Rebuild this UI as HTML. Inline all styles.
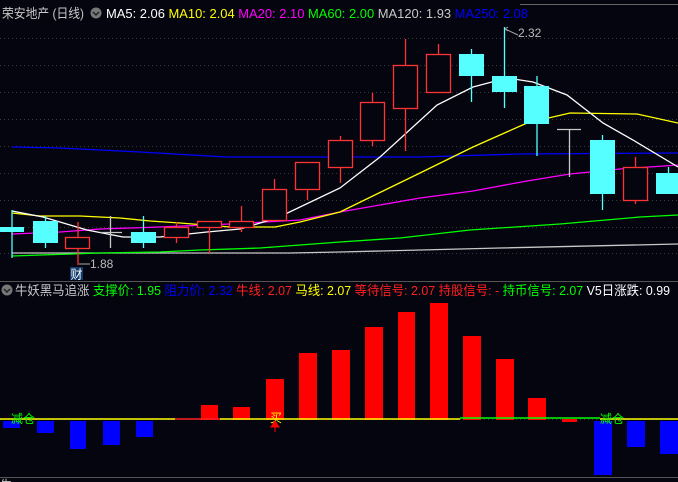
<!DOCTYPE html>
<html><head><meta charset="utf-8"><style>
html,body{margin:0;padding:0;background:#05050f;width:678px;height:482px;overflow:hidden}
svg{display:block}
text{font-family:"Liberation Sans","Noto Sans CJK SC",sans-serif}
</style></head><body>
<svg width="678" height="482" viewBox="0 0 678 482" xmlns="http://www.w3.org/2000/svg">
<rect width="678" height="482" fill="#05050f"/>
<line x1="520" y1="4.5" x2="678" y2="4.5" stroke="#666" stroke-width="1"/>
<g stroke="#3a3a3a" stroke-dasharray="1,3" stroke-width="1">
<line x1="0" y1="38.5" x2="678" y2="38.5"/><line x1="0" y1="65.5" x2="678" y2="65.5"/>
<line x1="0" y1="92.5" x2="678" y2="92.5"/><line x1="0" y1="119.5" x2="678" y2="119.5"/>
<line x1="0" y1="146.5" x2="678" y2="146.5"/><line x1="0" y1="173.5" x2="678" y2="173.5"/>
<line x1="0" y1="200.5" x2="678" y2="200.5"/><line x1="0" y1="227.5" x2="678" y2="227.5"/>
<line x1="0" y1="253.5" x2="678" y2="253.5"/>
<line x1="0" y1="419.5" x2="678" y2="419.5"/>
</g>
<line x1="0" y1="281.5" x2="678" y2="281.5" stroke="#555"/>
<line x1="0" y1="477.5" x2="678" y2="477.5" stroke="#555"/>
<g fill="none" stroke-width="1.3">
<polyline stroke="#0000ff" points="12,147 60,148 100,150 140,152 226,157 420,157 520,154 678,153"/>
<polyline stroke="#c8c8c8" points="12,253 290,253 340,252 500,248 678,244"/>
<polyline stroke="#00ff00" points="12,256 100,253 160,252 200,250 260,248 300,245 340,242 400,238 470,230 560,224 640,217 678,215"/>
<polyline stroke="#ff00ff" points="12,234 60,232 100,229 160,227 230,224 300,220 340,212 420,198 473,191 527,181 570,174 620,169 678,165"/>
<polyline stroke="#ffff00" points="12,213 40,216 80,216 120,218 150,221 180,223 230,227 275,227 300,222 340,212 420,173 473,147 527,123 570,113 637,114 678,123"/>
<polyline stroke="#ffffff" points="12,211 43,217 87,230 123,237 160,237 207,232 240,229 277,218 340,188 380,157 437,105 473,87 507,78 533,82 567,95 603,123 633,140 678,167"/>
<line x1="12" y1="210" x2="12" y2="258" stroke="#55ffff"/>
</g>
<g stroke-width="1.3">
<rect x="0" y="227" width="24" height="5" fill="#55ffff"/>
<line x1="45.5" y1="216" x2="45.5" y2="248" stroke="#55ffff"/><rect x="33" y="221" width="25" height="22" fill="#55ffff"/>
<line x1="78" y1="222" x2="78" y2="265" stroke="#ff3333"/><rect x="65.5" y="237.5" width="24" height="11" fill="#05050f" stroke="#ff3333"/>
<line x1="110.5" y1="216" x2="110.5" y2="248" stroke="#c8c8c8"/><line x1="100" y1="232.5" x2="122" y2="232.5" stroke="#c8c8c8"/>
<line x1="143.5" y1="216" x2="143.5" y2="248" stroke="#55ffff"/><rect x="131" y="232" width="25" height="11" fill="#55ffff"/>
<line x1="176.5" y1="222" x2="176.5" y2="243" stroke="#ff3333"/><rect x="164.5" y="227.5" width="24" height="10" fill="#05050f" stroke="#ff3333"/>
<line x1="209.5" y1="221" x2="209.5" y2="253" stroke="#ff3333"/><rect x="197.5" y="221.5" width="24" height="6" fill="#05050f" stroke="#ff3333"/>
<line x1="241.5" y1="206" x2="241.5" y2="232" stroke="#ff3333"/><rect x="229.5" y="221.5" width="24" height="6" fill="#05050f" stroke="#ff3333"/>
<line x1="274.5" y1="179" x2="274.5" y2="221" stroke="#ff3333"/><rect x="262.5" y="189.5" width="24" height="31" fill="#05050f" stroke="#ff3333"/>
<line x1="307.5" y1="162" x2="307.5" y2="200" stroke="#ff3333"/><rect x="295.5" y="162.5" width="24" height="27" fill="#05050f" stroke="#ff3333"/>
<line x1="340.5" y1="136" x2="340.5" y2="183" stroke="#ff3333"/><rect x="328.5" y="140.5" width="24" height="27" fill="#05050f" stroke="#ff3333"/>
<line x1="372.5" y1="93" x2="372.5" y2="146" stroke="#ff3333"/><rect x="360.5" y="102.5" width="24" height="38" fill="#05050f" stroke="#ff3333"/>
<line x1="405.5" y1="39" x2="405.5" y2="151" stroke="#ff3333"/><rect x="393.5" y="65.5" width="24" height="43" fill="#05050f" stroke="#ff3333"/>
<line x1="438.5" y1="44" x2="438.5" y2="54" stroke="#ff3333"/><rect x="426.5" y="54.5" width="24" height="38" fill="#05050f" stroke="#ff3333"/>
<line x1="471.5" y1="49" x2="471.5" y2="102" stroke="#55ffff"/><rect x="459" y="54" width="25" height="22" fill="#55ffff"/>
<line x1="504.5" y1="27" x2="504.5" y2="108" stroke="#55ffff"/><rect x="492" y="76" width="25" height="16" fill="#55ffff"/>
<line x1="537" y1="76" x2="537" y2="156" stroke="#55ffff"/><rect x="524" y="86" width="25" height="38" fill="#55ffff"/>
<line x1="569.5" y1="129" x2="569.5" y2="177" stroke="#c8c8c8"/><line x1="557" y1="129.5" x2="581" y2="129.5" stroke="#c8c8c8"/>
<line x1="602.5" y1="135" x2="602.5" y2="210" stroke="#55ffff"/><rect x="590" y="140" width="25" height="54" fill="#55ffff"/>
<line x1="635.5" y1="157" x2="635.5" y2="204" stroke="#ff3333"/><rect x="623.5" y="167.5" width="24" height="33" fill="#05050f" stroke="#ff3333"/>
<line x1="668.5" y1="167" x2="668.5" y2="173" stroke="#55ffff"/><rect x="656" y="173" width="22" height="21" fill="#55ffff"/>
</g>
<path d="M505 29 L508 27 M505 29 L508 31 M505 29 L518 35" stroke="#aaa" fill="none"/>
<text x="518" y="37" fill="#bbbbbb" font-size="12">2.32</text>
<path d="M79 264 L90 264" stroke="#aaa"/>
<text x="90" y="268" fill="#bbbbbb" font-size="12">1.88</text>
<rect x="70" y="267" width="13" height="13" fill="#123a6a"/>
<text x="70.5" y="278.5" fill="#ffffff" font-size="12">财</text>
<text x="2" y="18" font-size="13" fill="#c8c8c8" textLength="82" lengthAdjust="spacingAndGlyphs">荣安地产 (日线)</text>
<circle cx="96" cy="13" r="5.5" fill="#777"/><path d="M93 12 L96 15 L99 12" stroke="#222" fill="none" stroke-width="1.5"/>
<text x="106" y="18" font-size="13" textLength="422" lengthAdjust="spacingAndGlyphs"><tspan fill="#ffffff">MA5: 2.06 </tspan><tspan fill="#ffff00">MA10: 2.04 </tspan><tspan fill="#ff00ff">MA20: 2.10 </tspan><tspan fill="#00ff00">MA60: 2.00 </tspan><tspan fill="#c8c8c8">MA120: 1.93 </tspan><tspan fill="#0000ff">MA250: 2.08</tspan></text>
<circle cx="7" cy="290" r="5.5" fill="#777"/><path d="M4 289 L7 292 L10 289" stroke="#222" fill="none" stroke-width="1.5"/>
<text x="15" y="295" font-size="13" textLength="655" lengthAdjust="spacingAndGlyphs"><tspan fill="#c8c8c8">牛妖黑马追涨 </tspan><tspan fill="#00ff00">支撑价: 1.95 </tspan><tspan fill="#0000ff">阻力价: 2.32 </tspan><tspan fill="#ff2020">牛线: 2.07 </tspan><tspan fill="#ffff00">马线: 2.07 </tspan><tspan fill="#ff2020">等待信号: 2.07 持股信号: - </tspan><tspan fill="#00ff00">持币信号: 2.07 </tspan><tspan fill="#ffffff">V5日涨跌: 0.99</tspan></text>
<g fill="#ff0000">
<rect x="201" y="405" width="17" height="15"/><rect x="233" y="407" width="17" height="13"/>
<rect x="266" y="379" width="18" height="41"/><rect x="299" y="353" width="18" height="67"/>
<rect x="332" y="350" width="18" height="70"/><rect x="365" y="327" width="18" height="93"/>
<rect x="398" y="312" width="17" height="108"/><rect x="430" y="303" width="18" height="117"/>
<rect x="463" y="336" width="18" height="84"/><rect x="496" y="359" width="18" height="61"/>
<rect x="528" y="398" width="18" height="22"/><rect x="562" y="419" width="15" height="3"/>
</g>
<g fill="#0000ff">
<rect x="3" y="421" width="17" height="7"/><rect x="37" y="421" width="17" height="12"/>
<rect x="70" y="421" width="16" height="28"/><rect x="103" y="421" width="17" height="24"/>
<rect x="136" y="421" width="17" height="16"/><rect x="594" y="421" width="18" height="54"/>
<rect x="627" y="421" width="18" height="26"/><rect x="660" y="421" width="18" height="33"/>
</g>
<polyline fill="none" stroke="#ffff00" stroke-width="1.5" points="0,419 175,419"/>
<polyline fill="none" stroke="#ff2020" stroke-width="1.5" points="175,419 220,419"/>
<polyline fill="none" stroke="#ffff00" stroke-width="1.5" points="220,419 460,419"/>
<polyline fill="none" stroke="#00ff00" stroke-width="1.5" points="460,418 600,418"/>
<polyline fill="none" stroke="#ffff00" stroke-width="1.5" points="600,419 678,419"/>
<text x="11" y="423" font-size="12" fill="#00ff00">减仓</text>
<text x="600" y="423" font-size="12" fill="#00ff00">减仓</text>
<text x="270" y="422" font-size="12" fill="#ffff00">买</text>
<path d="M275 421 L279 427 L271 427 Z M275 427 L275 432" fill="#ff0000" stroke="#ff0000"/>
<text x="0" y="489" font-size="12" fill="#c8c8c8">生</text>
</svg>
</body></html>
